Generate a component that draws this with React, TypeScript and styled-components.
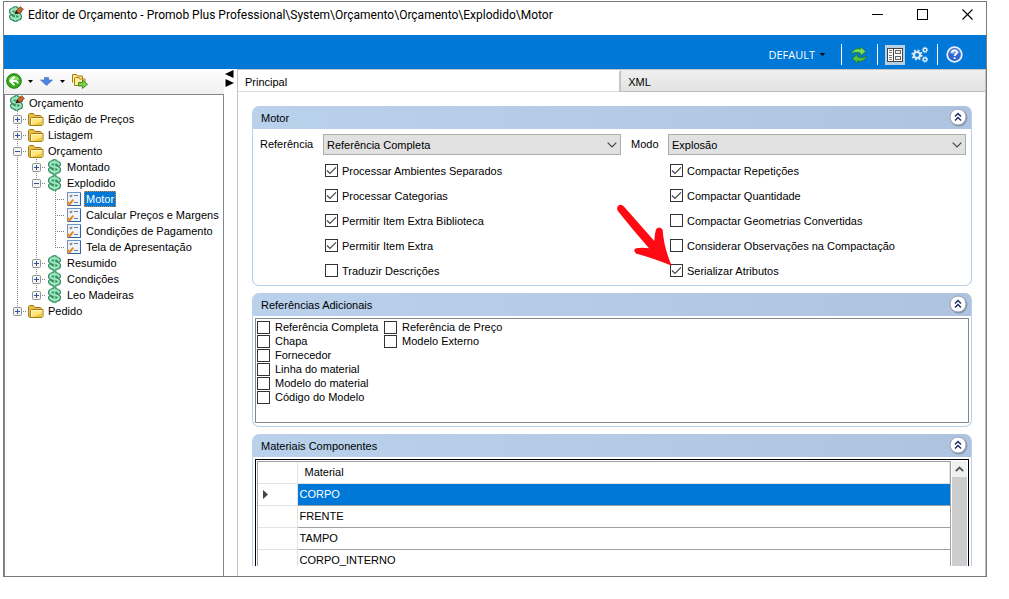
import React, { useId, useState } from "react";
import styled, { createGlobalStyle } from "styled-components";

const GlobalStyle = createGlobalStyle`
  * { box-sizing: border-box; }
  body { margin: 0; background: #fff; color: #000; font: 11px/16px "Liberation Sans", Arial, sans-serif; }
  button, input, select { font: inherit; color: inherit; margin: 0; }
  button { padding: 0; border: 0; background: none; }
`;

const Page = styled.div`
  display: flex;
  height: 100vh;
  padding: 1px 22px 22px 3px;
`;
const Window = styled.div`
  flex: 1;
  min-width: 0;
  display: flex;
  flex-direction: column;
  border: 1px solid #7a7a7a;
`;

const TitleBar = styled.header`
  display: flex;
  flex: none;
  align-items: flex-start;
  height: 33px;
  padding: 4px 13px 0 3px;
`;
const WindowTitle = styled.h1`
  flex: 1;
  margin: 0;
  padding-left: 4px;
  font: 12px/18px Roboto, "Open Sans", sans-serif;
  white-space: nowrap;
`;
const WindowButtons = styled.div`
  display: flex;
  gap: 34px;
  padding-top: 3px;
`;
const IconButton = styled.button`
  display: flex;
  align-items: center;
  justify-content: center;
`;

const CommandBar = styled.div`
  display: flex;
  flex: none;
  align-items: center;
  justify-content: flex-end;
  height: 34px;
  padding: 5px 14px 0 0;
  background: #0078d7;
`;
const ProfileButton = styled.button`
  display: flex;
  align-items: center;
  gap: 5px;
  margin-right: 16px;
  color: #fff;
  font: 11px/16px "Open Sans", "Noto Sans", sans-serif;
`;
const BarSeparator = styled.span`
  width: 1px;
  height: 21px;
  background: #fff;
`;
const BarGroup = styled.div`
  display: flex;
  gap: 6px;
  padding: 0 8px 0 7px;
`;
const ToggleButton = styled(IconButton)`
  width: 20px;
  height: 20px;
  background: #b9cfe3;
`;

const Body = styled.div`
  flex: 1;
  min-height: 0;
  display: flex;
`;
const Sidebar = styled.nav`
  flex: none;
  width: 220px;
  display: flex;
  flex-direction: column;
`;
const TreeTools = styled.div`
  display: flex;
  flex: none;
  align-items: center;
  gap: 6px;
  height: 25px;
  padding: 0 0 1px 2px;
  background: linear-gradient(#fdfdfd, #f1f1f1);
`;
const Tree = styled.ul`
  flex: 1;
  min-height: 0;
  overflow: hidden;
  margin: 0;
  padding: 0 0 0 3px;
  list-style: none;
  border: 1px solid #828790;
  border-bottom: 0;
`;
const TreeRow = styled.li`
  display: flex;
  height: 16px;
  align-items: center;
  > svg { flex: none; }
`;
const TreeLabel = styled.span<{ $selected?: boolean }>`
  margin-left: 2px;
  padding: 0 2px;
  line-height: 16px;
  white-space: nowrap;
  color: ${(p) => (p.$selected ? "#fff" : "#000")};
  background: ${(p) => (p.$selected ? "#0078d7" : "transparent")};
  outline: ${(p) => (p.$selected ? "1px dotted #e08a30" : "none")};
  outline-offset: -1px;
`;
const Splitter = styled.div`
  flex: none;
  width: 13px;
  padding: 1px 0 0 1px;
  display: flex;
  flex-direction: column;
`;

const Main = styled.main`
  flex: 1;
  min-width: 0;
  display: flex;
  flex-direction: column;
  border: 1px solid #c3c3c3;
  border-width: 1px 1px 0 1px;
`;
const Tabs = styled.div`
  flex: none;
  display: flex;
  height: 22px;
`;
const Tab = styled.button<{ $active?: boolean }>`
  flex: ${(p) => (p.$active ? 21 : 20)} 1 0;
  padding: 2px 7px 0;
  text-align: left;
  background: ${(p) => (p.$active ? "#fff" : "linear-gradient(#f0f0f0, #e2e2e2)")};
  border-bottom: 1px solid ${(p) => (p.$active ? "#dcdcdc" : "#bdbdbd")};
  border-left: ${(p) => (p.$active ? "0" : "2px solid #c6c6c6")};
  border-top-left-radius: 3px;
`;
const Panels = styled.div`
  flex: 1;
  min-height: 0;
  display: flex;
  flex-direction: column;
  gap: 7px;
  padding: 14px 13px 10px 14px;
`;
const Panel = styled.section<{ $fill?: boolean }>`
  flex: ${(p) => (p.$fill ? "1 1 0" : "none")};
  min-height: 0;
  display: flex;
  flex-direction: column;
  overflow: ${(p) => (p.$fill ? "hidden" : "visible")};
  border: 1px solid #b8d0ea;
  border-width: ${(p) => (p.$fill ? "0 1px" : "0 1px 1px")};
  border-radius: ${(p) => (p.$fill ? "7px 7px 0 0" : "7px")};
`;
const PanelHead = styled.div`
  flex: none;
  display: flex;
  align-items: center;
  justify-content: space-between;
  height: 23px;
  padding: 0 3px 0 8px;
  border-radius: 6px 6px 0 0;
  background: linear-gradient(90deg, #bad1ec, #aec3df);
`;
const PanelTitle = styled.h2`
  margin: 0;
  font-size: 11px;
  font-weight: normal;
`;

const FormGrid = styled.div`
  display: grid;
  grid-template-columns: 63px 1fr 47px 1fr;
  padding: 5px 5px 2px 7px;
`;
const FieldLabel = styled.label<{ $indent?: boolean }>`
  padding-left: ${(p) => (p.$indent ? 10 : 0)}px;
  line-height: 21px;
`;
const SelectBox = styled.span`
  display: grid;
  align-items: center;
  > * { grid-area: 1 / 1; }
  > svg { justify-self: end; margin-right: 4px; pointer-events: none; }
`;
const Select = styled.select`
  appearance: none;
  width: 100%;
  height: 21px;
  padding: 0 20px 0 3px;
  background: #e1e1e1;
  border: 1px solid #adadad;
  border-radius: 0;
`;
const CheckColumn = styled.div<{ $col: number }>`
  grid-column: ${(p) => p.$col};
  padding: 3px 0 0 2px;
`;
const CheckLabel = styled.label<{ $dense?: boolean }>`
  position: relative;
  display: flex;
  width: max-content;
  align-items: center;
  gap: ${(p) => (p.$dense ? 5 : 4)}px;
  height: ${(p) => (p.$dense ? 14 : 25)}px;
  line-height: 14px;
`;
const CheckMark = styled.span`
  display: grid;
  > * { grid-area: 1 / 1; }
  > svg { pointer-events: none; }
`;
const CheckInput = styled.input`
  appearance: none;
  width: 13px;
  height: 13px;
  background: #fff;
  border: 1px solid #333;
`;
const Pointer = styled.svg`
  position: absolute;
  left: -55px;
  bottom: 15px;
  pointer-events: none;
`;

const OptionList = styled.div`
  display: grid;
  grid-template-columns: 127px 127px;
  align-items: start;
  height: 105px;
  margin: 2px 2px 3px;
  padding: 1px;
  border: 1px solid #828790;
`;

const GridFrame = styled.div`
  flex: 1;
  min-height: 0;
  display: flex;
  overflow: hidden;
  margin: 2px 2px 0;
  border: 1px solid #000;
  border-width: 1px 1px 0;
`;
const GridView = styled.div`
  flex: 1;
  min-width: 0;
  overflow: hidden;
  margin: 1px 1px 0 1px;
  border: 1px solid #a0a0a0;
  border-bottom: 0;
`;
const Table = styled.table`
  width: 100%;
  table-layout: fixed;
  border-collapse: collapse;
  text-align: left;
`;
const Row = styled.tr`
  height: 22px;
`;
const HeadCell = styled.th`
  width: ${(p) => p.width};
  height: 21px;
  padding: 0 7px;
  font-weight: normal;
  border-right: 1px solid #e3e3e3;
  border-bottom: 1px solid #e3e3e3;
`;
const MarkerCell = styled.td`
  padding: 0 0 0 5px;
  line-height: 0;
  border-right: 1px solid #e3e3e3;
  border-bottom: 1px solid #e3e3e3;
`;
const ValueCell = styled.td<{ $selected?: boolean }>`
  padding: 0 2px;
  color: ${(p) => (p.$selected ? "#fff" : "#000")};
  background: ${(p) => (p.$selected ? "#0078d7" : "#fff")};
  border-bottom: 1px solid #a0a0a0;
`;
const ScrollBar = styled.div`
  flex: none;
  width: 15px;
  margin: 1px 1px 0 0;
  display: flex;
  flex-direction: column;
`;
const ScrollButton = styled(IconButton)`
  flex: none;
  height: 16px;
  background: #f0f0f0;
`;
const ScrollThumb = styled.div`
  flex: 1;
  background: #cdcdcd;
`;

const S_CURVE = "M12.8 5.4Q12 3.2 8.5 3.2Q4.200 3.200 4.200 5.500Q4.200 7.400 8.500 8T12.800 10.500Q12.800 12.800 8.500 12.800Q5 12.800 4.200 10.600";
const Dollar = ({ pencil }: { pencil?: boolean }) => (
  <svg width="17" height="16" viewBox="0 0 17 16" fill="none" aria-hidden="true">
    <path d="M8.5 0v16" stroke="#4fa87c" strokeWidth="4" />
    <path d={S_CURVE} stroke="#2f8a5b" strokeWidth="4.600" strokeLinecap="round" />
    <path d="M8.500 1v14" stroke="#8fdcb1" strokeWidth="1.600" />
    <path d={S_CURVE} stroke="#a0e8c0" strokeWidth="2.200" strokeLinecap="round" />
    {pencil && (
      <>
        <path d="M8 7.8l1.4-3.4 4-3.6 3 2.4-4.2 4.2z" fill="#c9662b" stroke="#70310f" strokeWidth=".7" />
        <path d="M7.6 8.3l1.600-3.800 2.600 2.800z" fill="#2a2018" />
      </>
    )}
  </svg>
);
const Folder = () => (
  <svg width="17" height="16" viewBox="0 0 17 16" aria-hidden="true">
    <path d="M1.5 13.500V4l1-1.500h4l1.500 2h5.500l1 1v9H2.500z" fill="#e9c046" stroke="#a67c14" />
    <path d="M3.500 14.500V7.500l1-1h11.500v7l-1 1z" fill="#ffe680" stroke="#a67c14" />
    <path d="M4.500 13.500V7.600H15" fill="none" stroke="#fff8d0" />
    <path d="M5 14h10.500v-4z" fill="#ecc548" />
  </svg>
);
const Sheet = () => (
  <svg width="17" height="16" viewBox="0 0 17 16" aria-hidden="true">
    <rect x="2.5" y="1.5" width="13" height="13" fill="#eef4ff" stroke="#6f94cc" />
    <path d="M15.5 2v12.500H3" fill="none" stroke="#38629f" />
    <path d="M9 4.500h4M9 11.500h4" stroke="#5f7fb5" />
    <path d="M4.500 4.400l1.300 1.200 1.400-1.700" fill="none" stroke="#947342" strokeWidth="1.200" />
    <path d="M2.500 11l2.200 2.200L8.200 8.600" fill="none" stroke="#e08a1c" strokeWidth="2" />
  </svg>
);

type BranchProps = { up?: boolean; down?: boolean; arm?: boolean; box?: "+" | "-" };
const Branch = ({ up, down, arm, box }: BranchProps) => (
  <svg width="19" height="16" viewBox="0 0 19 16" fill="none" aria-hidden="true">
    <g stroke="#808080" strokeDasharray="1 1">
      {up && <path d="M9.5 0v8" />}
      {down && <path d="M9.5 8v8" />}
      {arm && <path d="M9 8.5h10" />}
    </g>
    {box && (
      <>
        <rect x="5.5" y="4.5" width="8" height="8" rx="1" fill="#f4f4f4" stroke="#919191" />
        <path d={box === "+" ? "M7 8.5h5M9.5 6v5" : "M7 8.5h5"} stroke="#3451a0" />
      </>
    )}
  </svg>
);

const LINE: BranchProps = { up: true, down: true };
const LEAF: BranchProps = { up: true, down: true, arm: true };
const node = (box: "+" | "-", last = false): BranchProps => ({ up: true, down: !last, arm: true, box });

const TREE: { label: string; icon: "root" | "folder" | "dollar" | "sheet"; cells: BranchProps[] }[] = [
  { label: "Orçamento", icon: "root", cells: [] },
  { label: "Edição de Preços", icon: "folder", cells: [node("+")] },
  { label: "Listagem", icon: "folder", cells: [node("+")] },
  { label: "Orçamento", icon: "folder", cells: [node("-")] },
  { label: "Montado", icon: "dollar", cells: [LINE, node("+")] },
  { label: "Explodido", icon: "dollar", cells: [LINE, node("-")] },
  { label: "Motor", icon: "sheet", cells: [LINE, LINE, LEAF] },
  { label: "Calcular Preços e Margens", icon: "sheet", cells: [LINE, LINE, LEAF] },
  { label: "Condições de Pagamento", icon: "sheet", cells: [LINE, LINE, LEAF] },
  { label: "Tela de Apresentação", icon: "sheet", cells: [LINE, LINE, { up: true, arm: true }] },
  { label: "Resumido", icon: "dollar", cells: [LINE, node("+")] },
  { label: "Condições", icon: "dollar", cells: [LINE, node("+")] },
  { label: "Leo Madeiras", icon: "dollar", cells: [LINE, node("+", true)] },
  { label: "Pedido", icon: "folder", cells: [node("+", true)] },
];

const Caret = () => (
  <svg width="5" height="3" viewBox="0 0 5 3" aria-hidden="true"><path d="M0 0h5L2.5 3z" fill="#000" /></svg>
);
const Chevron = () => (
  <svg width="10" height="6" viewBox="0 0 10 6" fill="none" aria-hidden="true">
    <path d="M.7.7L5 5 9.3.7" stroke="#444" strokeWidth="1.2" />
  </svg>
);

function Check({ label, checked = false, dense, pointed }: { label: string; checked?: boolean; dense?: boolean; pointed?: boolean }) {
  const [on, setOn] = useState(checked);
  const id = useId();
  return (
    <CheckLabel $dense={dense} htmlFor={id}>
      <CheckMark>
        <CheckInput id={id} type="checkbox" checked={on} onChange={() => setOn(!on)} />
        {on && (
          <svg width="13" height="13" viewBox="0 0 13 13" fill="none" aria-hidden="true">
            <path d="M2 6.5l3 3 6-6.2" stroke="#444" strokeWidth="1.2" />
          </svg>
        )}
      </CheckMark>
      {label}
      {pointed && (
        <Pointer width="58" height="65" viewBox="105 70 174 195" aria-hidden="true">
          <path
            d="M113 93Q108 80 118 76Q126 74 133 82L223 184Q224 163 228 149Q238 137 248 150Q251 202 275 258Q215 234 169 222Q157 212 168 206Q186 203 207 206Q160 152 113 93Z"
            fill="#ff0a12"
          />
        </Pointer>
      )}
    </CheckLabel>
  );
}

function Section({ title, fill, children }: { title: string; fill?: boolean; children: React.ReactNode }) {
  return (
    <Panel $fill={fill}>
      <PanelHead>
        <PanelTitle>{title}</PanelTitle>
        <IconButton aria-label={`Recolher ${title}`}>
          <svg width="19" height="19" viewBox="0 0 19 19" fill="none">
            <circle cx="9.8" cy="9.8" r="8.6" fill="#8793a8" />
            <circle cx="9" cy="9" r="8" fill="#fff" stroke="#9aa2b4" />
            <path d="M6 8.5l3-3 3 3M6 12.5l3-3 3 3" stroke="#1f2f68" strokeWidth="1.5" />
          </svg>
        </IconButton>
      </PanelHead>
      {children}
    </Panel>
  );
}

const LEFT_CHECKS: [string, boolean][] = [
  ["Processar Ambientes Separados", true],
  ["Processar Categorias", true],
  ["Permitir Item Extra Biblioteca", true],
  ["Permitir Item Extra", true],
  ["Traduzir Descrições", false],
];
const RIGHT_CHECKS: [string, boolean][] = [
  ["Compactar Repetições", true],
  ["Compactar Quantidade", true],
  ["Compactar Geometrias Convertidas", false],
  ["Considerar Observações na Compactação", false],
  ["Serializar Atributos", true],
];
const EXTRA_REFERENCES = [
  ["Referência Completa", "Chapa", "Fornecedor", "Linha do material", "Modelo do material", "Código do Modelo"],
  ["Referência de Preço", "Modelo Externo"],
];
const MATERIALS = ["CORPO", "FRENTE", "TAMPO", "CORPO_INTERNO"];

export default function App() {
  return (
    <>
      <GlobalStyle />
      <Page>
        <Window>
          <TitleBar>
            <Dollar pencil />
            <WindowTitle>Editor de Orçamento - Promob Plus Professional\System\Orçamento\Orçamento\Explodido\Motor</WindowTitle>
            <WindowButtons>
              <IconButton aria-label="Minimizar">
                <svg width="11" height="11"><path d="M0 5.5h11" stroke="#000" /></svg>
              </IconButton>
              <IconButton aria-label="Maximizar">
                <svg width="11" height="11"><rect x=".5" y=".5" width="10" height="10" fill="none" stroke="#000" /></svg>
              </IconButton>
              <IconButton aria-label="Fechar">
                <svg width="11" height="11"><path d="M.5.5l10 10M10.5.5l-10 10" stroke="#000" strokeWidth="1.1" /></svg>
              </IconButton>
            </WindowButtons>
          </TitleBar>

          <CommandBar>
            <ProfileButton>DEFAULT <Caret /></ProfileButton>
            <BarSeparator />
            <BarGroup>
              <IconButton aria-label="Atualizar">
                <svg width="20" height="18" viewBox="0 0 20 18">
                  <path d="M2.500 8C3.500 3.600 8 1.800 11.500 3.200V.8l5.300 4.700-5.300 4.300V7.200C8.500 5.800 5.500 6 2.500 8z" fill="#7bdc5c" stroke="#1c7a22" strokeWidth=".8" />
                  <path d="M17.500 10c-1 4.400-5.500 6.200-9 4.800v2.400l-5.300-4.700 5.300-4.300v2.600c3 1.400 6 1.200 9-.8z" fill="#55c043" stroke="#1c7a22" strokeWidth=".8" />
                </svg>
              </IconButton>
            </BarGroup>
            <BarSeparator />
            <BarGroup>
              <ToggleButton aria-label="Propriedades">
                <svg width="16" height="16" viewBox="0 0 16 16" fill="none">
                  <rect x=".5" y="1.500" width="15" height="13" fill="#fff" stroke="#444" />
                  <path d="M6.500 1v14" stroke="#444" />
                  <path d="M2 3.500h3M2 5.500h3M2 8.500h3M2 10.500h3M2 12.500h3" stroke="#777" />
                  <rect x="8.500" y="3.500" width="5" height="3" fill="#eee" stroke="#666" />
                  <rect x="8.500" y="9.500" width="5" height="3" fill="#eee" stroke="#666" />
                </svg>
              </ToggleButton>
              <IconButton aria-label="Configurações">
                <svg width="18" height="18" viewBox="0 0 18 18" fill="none" stroke="#dcebf8">
                  <circle cx="6" cy="9" r="3" strokeWidth="2.200" />
                  <circle cx="6" cy="9" r="4.700" strokeWidth="1.800" strokeDasharray="1.850 1.840" />
                  <circle cx="14" cy="4" r="1.700" strokeWidth="1.400" />
                  <circle cx="14" cy="4" r="2.700" strokeWidth="1" strokeDasharray="1.100 1.020" />
                  <circle cx="14" cy="13.500" r="1.700" strokeWidth="1.400" />
                  <circle cx="14" cy="13.500" r="2.700" strokeWidth="1" strokeDasharray="1.100 1.020" />
                </svg>
              </IconButton>
            </BarGroup>
            <BarSeparator />
            <BarGroup>
              <IconButton aria-label="Ajuda">
                <svg width="19" height="17" viewBox="-1 0 19 17" fill="none">
                  <circle cx="8.500" cy="8.500" r="7.300" fill="#3566cf" stroke="#e6eefb" strokeWidth="1.800" />
                  <path d="M3.500 7a5.200 5.200 0 0 1 10 0q-5 2-10 0z" fill="#7da4ec" />
                  <path d="M6 6.800c0-3.200 5-3.200 5-.3 0 1.700-2.400 1.800-2.400 3.600M8.600 11.300v1.700" stroke="#fff" strokeWidth="1.700" />
                </svg>
              </IconButton>
            </BarGroup>
          </CommandBar>

          <Body>
            <Sidebar>
              <TreeTools>
                <IconButton aria-label="Voltar">
                  <svg width="16" height="16" viewBox="0 0 16 16" fill="none">
                    <circle cx="8" cy="8" r="7.300" fill="#38a81c" stroke="#1d7a0f" />
                    <path d="M2.500 6.500a6 6 0 0 1 11 0q-5.500 2-11 0z" fill="#8bdc6a" />
                    <path d="M8.500 3.800L4.200 8l4.300 4.200M4.600 8h4.600q2.600 0 2.600 2.600" stroke="#fff" strokeWidth="1.900" />
                  </svg>
                </IconButton>
                <IconButton aria-label="Histórico"><Caret /></IconButton>
                <IconButton aria-label="Descer">
                  <svg width="15" height="9" viewBox="-1 0 15 9">
                    <path d="M4.500.5h4v2.500h4L6.500 8.500.5 3h4z" fill="#4d86e0" stroke="#3c68b8" strokeWidth=".6" />
                  </svg>
                </IconButton>
                <IconButton aria-label="Níveis"><Caret /></IconButton>
                <IconButton aria-label="Ir para pasta">
                  <svg width="17" height="16" viewBox="0 0 17 16">
                    <path d="M1.500 9.500V1.500h4l1 1.500h5v3" fill="#ffe88f" stroke="#a67c14" />
                    <path d="M3.500 12.500V5.500l.8-1h3.500l1 1.500H14v6.500z" fill="#ffeb9a" stroke="#a67c14" />
                    <path d="M7.500 9.500h4V7l5 4.300-5 4.200V13h-4z" fill="#79d245" stroke="#33851a" strokeWidth=".9" />
                  </svg>
                </IconButton>
              </TreeTools>
              <Tree>
                {TREE.map((item, i) => (
                  <TreeRow key={i}>
                    {item.cells.map((cell, c) => <Branch key={c} {...cell} />)}
                    {item.icon === "folder" ? <Folder /> : item.icon === "sheet" ? <Sheet /> : <Dollar pencil={item.icon === "root"} />}
                    <TreeLabel $selected={item.label === "Motor"}>{item.label}</TreeLabel>
                  </TreeRow>
                ))}
              </Tree>
            </Sidebar>
            <Splitter>
              <svg width="9" height="18" viewBox="0 0 9 18" aria-hidden="true">
                <path d="M8.500 0v8L0 4zM.500 9v8L9 13z" fill="#000" />
              </svg>
            </Splitter>

            <Main>
              <Tabs role="tablist">
                <Tab role="tab" aria-selected $active>Principal</Tab>
                <Tab role="tab" aria-selected={false}>XML</Tab>
              </Tabs>
              <Panels>
                <Section title="Motor">
                  <FormGrid>
                    <FieldLabel htmlFor="referencia">Referência</FieldLabel>
                    <SelectBox>
                      <Select id="referencia"><option>Referência Completa</option></Select>
                      <Chevron />
                    </SelectBox>
                    <FieldLabel htmlFor="modo" $indent>Modo</FieldLabel>
                    <SelectBox>
                      <Select id="modo"><option>Explosão</option></Select>
                      <Chevron />
                    </SelectBox>
                    <CheckColumn $col={2}>
                      {LEFT_CHECKS.map(([label, on]) => <Check key={label} label={label} checked={on} />)}
                    </CheckColumn>
                    <CheckColumn $col={4}>
                      {RIGHT_CHECKS.map(([label, on]) => (
                        <Check key={label} label={label} checked={on} pointed={label === "Serializar Atributos"} />
                      ))}
                    </CheckColumn>
                  </FormGrid>
                </Section>

                <Section title="Referências Adicionais">
                  <OptionList>
                    {EXTRA_REFERENCES.map((column) => (
                      <div key={column[0]}>
                        {column.map((label) => <Check key={label} label={label} dense />)}
                      </div>
                    ))}
                  </OptionList>
                </Section>

                <Section title="Materiais Componentes" fill>
                  <GridFrame>
                    <GridView>
                      <Table>
                        <thead>
                          <tr>
                            <HeadCell width="39px" aria-label="Linha atual" />
                            <HeadCell>Material</HeadCell>
                          </tr>
                        </thead>
                        <tbody>
                          {MATERIALS.map((name, i) => (
                            <Row key={name}>
                              <MarkerCell>
                                {i === 0 && <svg width="5" height="9" viewBox="0 0 5 9"><path d="M0 0l5 4.500L0 9z" fill="#444" /></svg>}
                              </MarkerCell>
                              <ValueCell $selected={i === 0}>{name}</ValueCell>
                            </Row>
                          ))}
                        </tbody>
                      </Table>
                    </GridView>
                    <ScrollBar>
                      <ScrollButton aria-label="Rolar para cima">
                        <svg width="9" height="6" viewBox="0 0 9 6" fill="none"><path d="M.8 5.200L4.500 1.500l3.700 3.700" stroke="#555" strokeWidth="1.800" /></svg>
                      </ScrollButton>
                      <ScrollThumb />
                    </ScrollBar>
                  </GridFrame>
                </Section>
              </Panels>
            </Main>
          </Body>
        </Window>
      </Page>
    </>
  );
}
